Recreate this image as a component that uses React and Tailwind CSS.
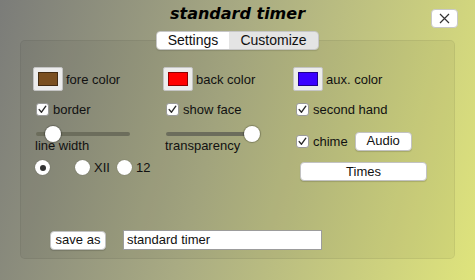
import React from "react";

const F = { fontFamily: '"Liberation Sans", Arial, sans-serif' };

function Check() {
  return (
    <div className="w-[13px] h-[13px] bg-white rounded-[3px] border border-[#9a9a9a] flex items-center justify-center shrink-0">
      <svg width="9" height="9" viewBox="0 0 9 9">
        <path d="M1.2 4.6 L3.5 7.2 L7.8 1.2" fill="none" stroke="#2a2a2a" strokeWidth="1.4" strokeLinecap="round" strokeLinejoin="round" />
      </svg>
    </div>
  );
}

function CheckRow({ label }) {
  return (
    <div className="flex items-center h-[13px] ml-[3px]">
      <Check />
      <span className="ml-[4px] text-[13px] leading-[13px] text-[#111]">{label}</span>
    </div>
  );
}

function Swatch({ color, label }) {
  return (
    <div className="flex items-center h-[24px]">
      <div className="w-[30px] h-[24px] bg-[#ececec] border border-[#c4c4c4] rounded-[2px] flex items-center justify-center shrink-0">
        <div className="w-[20px] h-[14px] border border-[rgba(0,0,0,0.45)]" style={{ background: color }} />
      </div>
      <span className="ml-[3px] text-[13px] text-[#111] leading-[15px]">{label}</span>
    </div>
  );
}

function Slider({ pos }) {
  return (
    <div className="relative w-[94px] h-[10px] ml-[3px] flex items-center">
      <div className="w-full h-[4px] rounded-full bg-[#6c6d5c]" />
      <div
        className="absolute top-[-3px] w-[16px] h-[16px] rounded-full bg-white shadow-[0_0_1px_1px_rgba(0,0,0,0.25)]"
        style={{ left: pos }}
      />
    </div>
  );
}

function Radio({ on }) {
  return (
    <div className="w-[15px] h-[15px] rounded-full bg-white shadow-[0_0_1px_rgba(0,0,0,0.4)] flex items-center justify-center shrink-0">
      {on && <div className="w-[6px] h-[6px] rounded-full bg-[#333]" />}
    </div>
  );
}

function Btn({ children, className }) {
  return (
    <div className={"bg-white rounded-[4px] border border-[#c2c2c2] shadow-[0_1px_1px_rgba(0,0,0,0.15)] flex items-center justify-center text-[13px] text-[#111] " + className}>
      {children}
    </div>
  );
}

export default function App() {
  return (
    <div
      className="relative w-[475px] h-[280px] overflow-hidden bg-[linear-gradient(105deg,#7b7c79_0%,#a9ab83_45%,#dfe47c_100%)]"
      style={F}
    >
      <div
        className="pt-[4px] text-center text-[16px] leading-[20px] font-bold italic text-black"
        style={{ fontFamily: '"DejaVu Sans", Verdana, sans-serif' }}
      >
        standard timer
      </div>
      <div className="absolute top-[9px] right-[17px] w-[27px] h-[19px] bg-white rounded-[4px] border border-[#c8c8c8] flex items-center justify-center">
        <svg width="11" height="11" viewBox="0 0 11 11">
          <path d="M1 1 L10 10 M10 1 L1 10" stroke="#333" strokeWidth="1.2" />
        </svg>
      </div>

      <div className="mt-[7px] flex justify-center relative z-10">
        <div className="flex h-[19px] rounded-[4px] border border-[#c6c6c6] overflow-hidden shadow-[0_1px_1px_rgba(0,0,0,0.12)] text-[14px] text-[#111]">
          <div className="w-[72px] bg-white flex items-center justify-center">Settings</div>
          <div className="w-[89px] bg-[#e4e4e4] flex items-center justify-center">Customize</div>
        </div>
      </div>

      <div className="mx-[20px] -mt-[10px] h-[219px] rounded-[5px] bg-[rgba(0,0,0,0.045)] border border-[rgba(0,0,0,0.06)] px-[12px] pt-[26px]">
        <div className="grid grid-cols-[130px_130px_130px] items-start">
          <div className="flex flex-col">
            <Swatch color="#7a4f20" label="fore color" />
            <div className="mt-[12px]"><CheckRow label="border" /></div>
            <div className="mt-[13px]"><Slider pos={9} /></div>
            <div className="ml-[2px] text-[13px] leading-[13px] text-[#111]">line width</div>
            <div className="mt-[8px] flex items-center h-[15px] ml-[2px] text-[13px] text-[#111]">
              <Radio on />
              <div className="ml-[25px]"><Radio /></div>
              <span className="ml-[4px]">XII</span>
              <div className="ml-[7px]"><Radio /></div>
              <span className="ml-[4px]">12</span>
            </div>
          </div>
          <div className="flex flex-col">
            <Swatch color="#ff0000" label="back color" />
            <div className="mt-[12px]"><CheckRow label="show face" /></div>
            <div className="mt-[13px]"><Slider pos={78} /></div>
            <div className="ml-[2px] text-[13px] leading-[13px] text-[#111]">transparency</div>
          </div>
          <div className="flex flex-col">
            <Swatch color="#3a00ff" label="aux. color" />
            <div className="mt-[12px]"><CheckRow label="second hand" /></div>
            <div className="mt-[15px] flex items-center h-[20px]">
              <CheckRow label="chime" />
              <Btn className="ml-[7px] w-[57px] h-[19px]">Audio</Btn>
            </div>
            <Btn className="mt-[11px] ml-[7px] w-[127px] h-[19px]">Times</Btn>
          </div>
        </div>
        <div className="mt-[49px] flex items-center ml-[17px]">
          <Btn className="w-[56px] h-[19px]">save as</Btn>
          <div className="ml-[17px] w-[199px] h-[20px] bg-white border border-[#9c9c9c] text-[13px] leading-[18px] pl-[3px] text-[#111]">
            standard timer
          </div>
        </div>
      </div>
    </div>
  );
}
